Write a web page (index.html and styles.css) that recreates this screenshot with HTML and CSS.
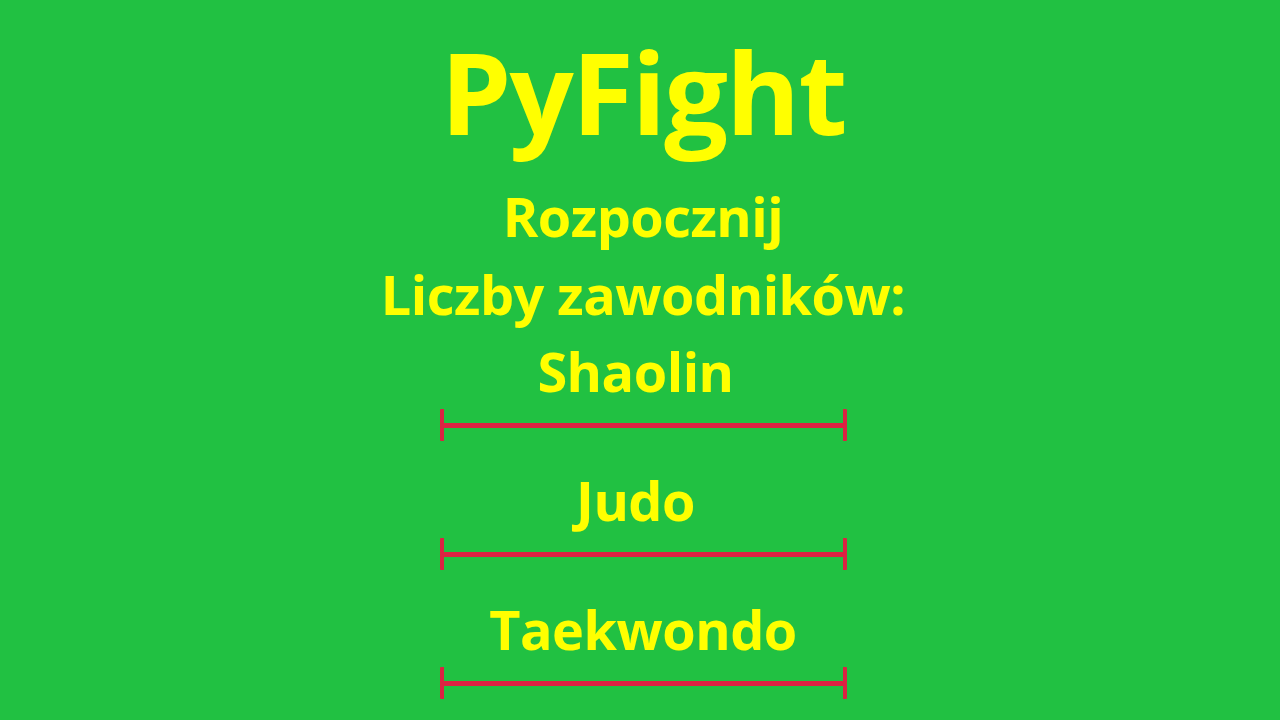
FILE: index.html
```html
<!DOCTYPE html>
<html lang="pl">
<head>
<meta charset="utf-8">
<title>PyFight</title>
<link rel="stylesheet" href="styles.css">
</head>
<body>
<main class="menu">
  <h1 class="title">PyFight</h1>
  <div class="line">Rozpocznij</div>
  <div class="line">Liczby zawodników:</div>
  <div class="options">
    <div class="option">
      <div class="option-label option-label--shifted">Shaolin</div>
      <div class="slider"><div class="slider-track"></div></div>
    </div>
    <div class="option">
      <div class="option-label option-label--shifted">Judo</div>
      <div class="slider"><div class="slider-track"></div></div>
    </div>
    <div class="option">
      <div class="option-label">Taekwondo</div>
      <div class="slider"><div class="slider-track"></div></div>
    </div>
  </div>
</main>
</body>
</html>
```
FILE: styles.css
```css
html, body {
  margin: 0;
  padding: 0;
}
body {
  background: #21c142;
  width: 1280px;
  height: 720px;
  overflow: hidden;
  font-family: "Open Sans", "Noto Sans", sans-serif;
  font-weight: 700;
  color: #ffff00;
}
.menu {
  display: flex;
  flex-direction: column;
  align-items: center;
  padding: 21px 0 0 6px;
}
.title {
  margin: 0 0 16px;
  font-size: 113px;
  line-height: 140px;
  letter-spacing: -2px;
  font-weight: 700;
}
.line {
  font-size: 54px;
  line-height: 78px;
  letter-spacing: -0.5px;
}
.options {
  display: flex;
  flex-direction: column;
  align-items: center;
  gap: 24px;
  margin-top: 3px;
}
.option {
  display: flex;
  flex-direction: column;
  align-items: center;
}
.option-label {
  font-size: 54px;
  line-height: 70px;
  letter-spacing: -0.5px;
}
.option-label--shifted {
  padding-right: 15px;
}
.slider {
  margin-top: 3px;
  width: 399px;
  height: 32px;
  border-left: 4px solid #dc2342;
  border-right: 4px solid #dc2342;
  border-radius: 1px;
  display: flex;
  align-items: center;
}
.slider-track {
  flex: 1;
  height: 5px;
  background: #dc2342;
}
```
